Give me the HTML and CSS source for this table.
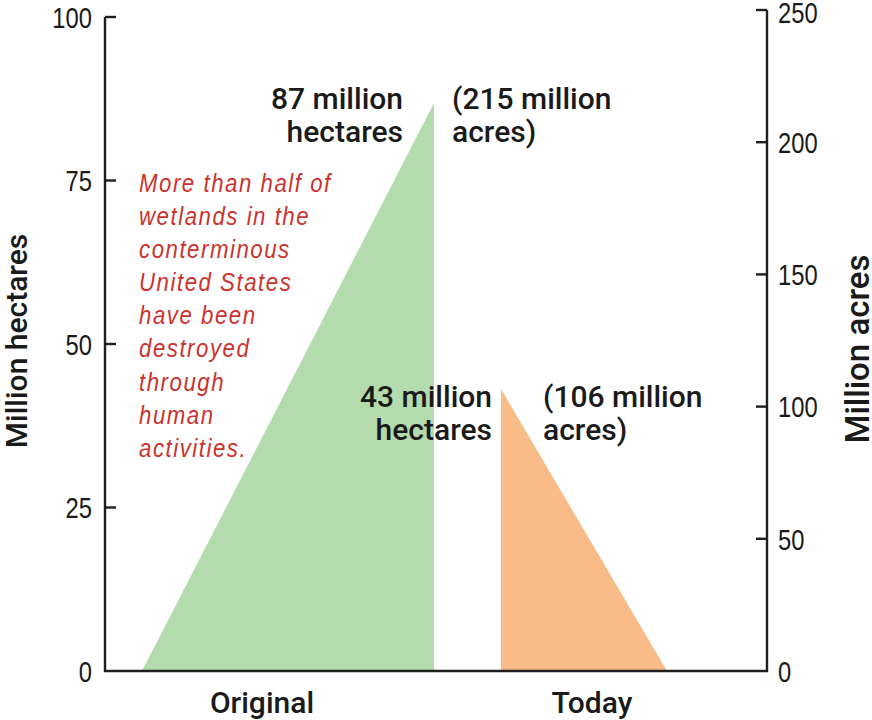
FILE: index.html
```html
<!DOCTYPE html>
<html lang="en">
<head>
<meta charset="utf-8">
<title>Wetlands: Original vs Today</title>
<link rel="stylesheet" href="styles.css">
</head>
<body>
<main class="page">
  <svg class="chart" viewBox="0 0 872 720" width="872" height="720" xmlns="http://www.w3.org/2000/svg">
    <!-- areas -->
    <polygon class="area-original" points="142,671 434,103 434,671"/>
    <polygon class="area-today" points="501,389 667,671 501,671"/>

    <!-- axes -->
    <g class="axis">
      <line x1="105" y1="17" x2="105" y2="672"/>
      <line x1="104" y1="671" x2="768" y2="671"/>
      <line x1="767" y1="10" x2="767" y2="672"/>
      <line x1="105" y1="17" x2="116" y2="17"/>
      <line x1="105" y1="180.5" x2="116" y2="180.5"/>
      <line x1="105" y1="344" x2="116" y2="344"/>
      <line x1="105" y1="507.5" x2="116" y2="507.5"/>
      <line x1="756" y1="10" x2="767" y2="10"/>
      <line x1="756" y1="142.2" x2="767" y2="142.2"/>
      <line x1="756" y1="274.4" x2="767" y2="274.4"/>
      <line x1="756" y1="406.6" x2="767" y2="406.6"/>
      <line x1="756" y1="538.8" x2="767" y2="538.8"/>
    </g>

    <!-- left tick labels (condensed) -->
    <g class="tick tick-left" transform="translate(92,0) scale(0.82,1)">
      <text x="0" y="28">100</text>
      <text x="0" y="191.5">75</text>
      <text x="0" y="355">50</text>
      <text x="0" y="518.5">25</text>
      <text x="0" y="682">0</text>
    </g>
    <!-- right tick labels (condensed) -->
    <g class="tick tick-right" transform="translate(778,0) scale(0.82,1)">
      <text x="0" y="23">250</text>
      <text x="0" y="153">200</text>
      <text x="0" y="285.5">150</text>
      <text x="0" y="417.5">100</text>
      <text x="0" y="550">50</text>
      <text x="0" y="682">0</text>
    </g>

    <!-- axis titles -->
    <text class="axis-title" transform="translate(27,341) rotate(-90)">Million hectares</text>
    <text class="axis-title axis-title-right" transform="translate(869,349) rotate(-90)">Million acres</text>

    <!-- value labels -->
    <text class="value value-end" x="403" y="109">87 million<tspan x="403" dy="33">hectares</tspan></text>
    <text class="value" x="452" y="109">(215 million<tspan x="452" dy="33">acres)</tspan></text>
    <text class="value value-end" x="492" y="407">43 million<tspan x="492" dy="33">hectares</tspan></text>
    <text class="value" x="543" y="407">(106 million<tspan x="543" dy="33">acres)</tspan></text>

    <!-- note (condensed italic) -->
    <g transform="translate(139,0) scale(0.84,1)">
      <text class="note" x="0" y="192">More than half of<tspan x="0" dy="33.1">wetlands in the</tspan><tspan x="0" dy="33.1">conterminous</tspan><tspan x="0" dy="33.1">United States</tspan><tspan x="0" dy="33.1">have been</tspan><tspan x="0" dy="33.1">destroyed</tspan><tspan x="0" dy="33.1">through</tspan><tspan x="0" dy="33.1">human</tspan><tspan x="0" dy="33.1">activities.</tspan></text>
    </g>

    <!-- categories -->
    <text class="category" x="262" y="713">Original</text>
    <text class="category" x="592" y="713">Today</text>
  </svg>
</main>
</body>
</html>
```

FILE: styles.css
```css
html, body {
  margin: 0;
  padding: 0;
  background: #ffffff;
}

.page {
  width: 872px;
  height: 720px;
  overflow: hidden;
}

.chart {
  display: block;
}

.area-original {
  fill: #b4dbae;
}

.area-today {
  fill: #f9bb87;
}

.axis line {
  stroke: #1f1f1f;
  stroke-width: 2.4;
  stroke-linecap: butt;
}

.tick text {
  font-family: "Liberation Sans", Arial, sans-serif;
  font-size: 29px;
  fill: #1a1a1a;
}

.tick-left text {
  text-anchor: end;
}

.tick-right text {
  text-anchor: start;
}

.axis-title {
  font-family: Roboto, "Liberation Sans", Arial, sans-serif;
  font-weight: 500;
  font-size: 30px;
  fill: #1a1a1a;
  text-anchor: middle;
}

.axis-title-right {
  font-size: 33px;
}

.value {
  font-family: Roboto, "Liberation Sans", Arial, sans-serif;
  font-weight: 500;
  font-size: 30px;
  fill: #1a1a1a;
}

.value-end {
  text-anchor: end;
}

.note {
  font-family: "Liberation Sans", Arial, sans-serif;
  font-style: italic;
  font-size: 26.5px;
  letter-spacing: 1.8px;
  fill: #cc322d;
}

.category {
  font-family: Roboto, "Liberation Sans", Arial, sans-serif;
  font-weight: 500;
  font-size: 30px;
  fill: #1a1a1a;
  text-anchor: middle;
}
```
